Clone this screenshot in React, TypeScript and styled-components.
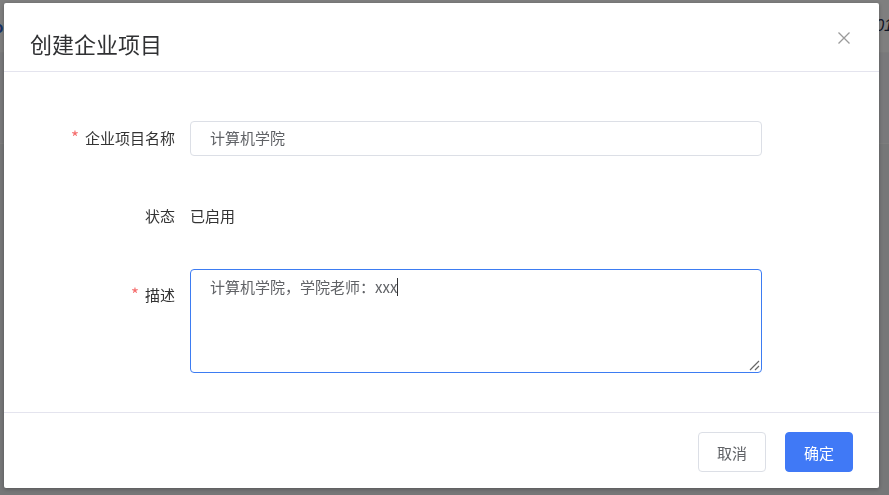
import React from 'react';
import styled, { createGlobalStyle } from 'styled-components';

const GlobalStyle = createGlobalStyle`
  html, body {
    margin: 0;
    padding: 0;
    height: 100%;
  }
  body {
    font-family: "Noto Sans CJK SC", "Noto Sans", "Liberation Sans", sans-serif;
    background: #eef0f4;
    overflow: hidden;
  }
`;

const Page = styled.div`
  width: 889px;
  height: 495px;
  display: flex;
  flex-direction: column;
`;

const PageHeader = styled.div`
  height: 52px;
  background: #ffffff;
  border-bottom: 1px solid #f6f6f6;
  display: flex;
  align-items: center;
  justify-content: space-between;
  font-size: 15px;
  color: #1d2b4a;
`;

const Logo = styled.span`
  color: #2e63c9;
  font-weight: 700;
  margin-left: -6px;
`;

const Clock = styled.span`
  font-style: italic;
  font-family: "Liberation Sans", sans-serif;
  font-size: 16px;
  margin-right: -4px;
`;

const PageBand = styled.div`
  height: 90px;
  background: #f2f3f6;
  border-bottom: 1px solid #fafafa;
`;

const PageRest = styled.div`
  flex: 1;
  background: #edeef1;
`;

const Overlay = styled.div`
  position: fixed;
  inset: 0;
  background: rgba(0, 0, 0, 0.5);
`;

const Dialog = styled.div`
  position: fixed;
  left: 4px;
  top: 3px;
  width: 875px;
  height: 485px;
  background: #ffffff;
  border-radius: 2px;
  box-shadow: 0 1px 4px rgba(0, 0, 0, 0.3);
  display: flex;
  flex-direction: column;
`;

const Header = styled.div`
  position: relative;
  padding: 25px 26px 13px;
  border-bottom: 1px solid #e4e4ee;
`;

const Title = styled.h2`
  margin: 0;
  font-size: 22px;
  line-height: 30px;
  font-weight: 400;
  color: #303133;
`;

const Close = styled.button`
  position: absolute;
  top: 28px;
  right: 28px;
  width: 14px;
  height: 14px;
  padding: 0;
  border: none;
  background: none;
  display: flex;
  cursor: pointer;
`;

const Body = styled.div`
  padding: 49px 0 39px 51px;
  border-bottom: 1px solid #e4e4ee;
  display: flex;
  flex-direction: column;
`;

const Row = styled.div<{ $gap: number; $top?: boolean }>`
  display: flex;
  align-items: ${(p) => (p.$top ? 'flex-start' : 'center')};
  margin-bottom: ${(p) => p.$gap}px;
`;

const Label = styled.label<{ $top?: boolean }>`
  width: 120px;
  padding-right: 15px;
  text-align: right;
  font-size: 15px;
  color: #333333;
  line-height: ${(p) => (p.$top ? '54px' : '20px')};
  margin-top: -2px;
`;

const Star = styled.span`
  color: #f56c6c;
  font-size: 17px;
  margin-right: 6px;
`;

const Input = styled.div`
  width: 572px;
  height: 35px;
  box-sizing: border-box;
  border: 1px solid #dcdfe6;
  border-radius: 4px;
  padding: 0 19px 3px;
  display: flex;
  align-items: center;
  font-size: 15px;
  color: #606266;
`;

const Value = styled.div`
  height: 35px;
  box-sizing: border-box;
  padding-bottom: 3px;
  display: flex;
  align-items: center;
  font-size: 15px;
  color: #333333;
`;

const TextArea = styled.div`
  position: relative;
  width: 572px;
  height: 104px;
  box-sizing: border-box;
  border: 1px solid #3d7cf2;
  border-radius: 4px;
  padding: 6px 19px;
  font-size: 15px;
  line-height: 22px;
  color: #606266;
`;

const Caret = styled.span`
  display: inline-block;
  width: 1px;
  height: 18px;
  background: #303133;
  vertical-align: -3px;
`;

const Grip = styled.svg`
  position: absolute;
  right: 1px;
  bottom: 1px;
`;

const Footer = styled.div`
  flex: 1;
  display: flex;
  justify-content: flex-end;
  align-items: flex-start;
  gap: 19px;
  padding: 19px 26px 0;
`;

const Button = styled.button<{ $primary?: boolean }>`
  width: 68px;
  height: 40px;
  border-radius: 4px;
  font-family: inherit;
  font-size: 15px;
  cursor: pointer;
  border: 1px solid ${(p) => (p.$primary ? '#4079f6' : '#dcdfe6')};
  background: ${(p) => (p.$primary ? '#4079f6' : '#ffffff')};
  color: ${(p) => (p.$primary ? '#ffffff' : '#606266')};
`;

export default function App() {
  return (
    <>
      <GlobalStyle />
      <Page>
        <PageHeader>
          <Logo>o</Logo>
          <Clock>01</Clock>
        </PageHeader>
        <PageBand />
        <PageRest />
      </Page>
      <Overlay />
      <Dialog>
        <Header>
          <Title>创建企业项目</Title>
          <Close aria-label="关闭">
            <svg width="14" height="14" viewBox="0 0 14 14">
              <path d="M1.5 1.5 L12.5 12.5 M12.5 1.5 L1.5 12.5" stroke="#9a9a9a" strokeWidth="1.3" fill="none" />
            </svg>
          </Close>
        </Header>
        <Body>
          <Row $gap={43}>
            <Label>
              <Star>*</Star>企业项目名称
            </Label>
            <Input>计算机学院</Input>
          </Row>
          <Row $gap={35}>
            <Label>状态</Label>
            <Value>已启用</Value>
          </Row>
          <Row $gap={0} $top>
            <Label $top>
              <Star>*</Star>描述
            </Label>
            <TextArea>
              计算机学院，学院老师：xxx<Caret />
              <Grip width="12" height="12" viewBox="0 0 12 12">
                <path d="M2 11 L11 2 M7 11 L11 7" stroke="#666" strokeWidth="1.2" fill="none" />
              </Grip>
            </TextArea>
          </Row>
        </Body>
        <Footer>
          <Button>取消</Button>
          <Button $primary>确定</Button>
        </Footer>
      </Dialog>
    </>
  );
}
